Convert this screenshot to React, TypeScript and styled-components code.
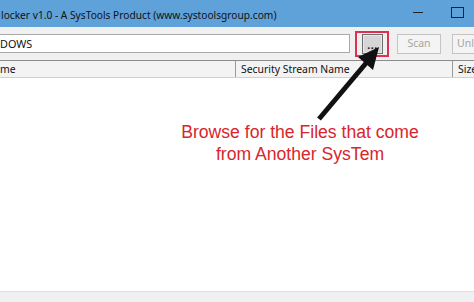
import React from 'react'
import styled, { createGlobalStyle } from 'styled-components'

const GlobalStyle = createGlobalStyle`
    html, body {
        margin: 0;
        padding: 0;
        background: #ffffff;
        overflow: hidden;
    }
    #root {
        width: 474px;
        height: 302px;
    }
`

const Window = styled.div`
    position: relative;
    width: 474px;
    height: 302px;
    display: flex;
    flex-direction: column;
    overflow: hidden;
    font-family: "Noto Sans", "Open Sans", sans-serif;
    background: #ffffff;
`

const TitleBar = styled.div`
    height: 27px;
    flex: none;
    display: flex;
    align-items: center;
    background: #5fa2da;
    color: #111;
    font-size: 10.2px;
    .title-bar {
        &__text {
            padding-left: 1px;
            margin-top: 2px;
            white-space: nowrap;
        }
        &__controls {
            margin-left: auto;
            display: flex;
            align-items: center;
            gap: 28px;
            padding-right: 10px;
            margin-top: -3px;
        }
    }
`

const MinIcon = styled.span`
    width: 10px;
    height: 1px;
    background: #222;
`

const MaxIcon = styled.span`
    width: 11px;
    height: 9px;
    border: 1px solid #222;
`

const Toolbar = styled.div`
    height: 33px;
    flex: none;
    display: flex;
    align-items: center;
    background: #f0f0f0;
    box-sizing: border-box;
    & > * {
        flex: none;
    }
`

const PathBox = styled.div`
    width: 352px;
    height: 19px;
    margin-left: -2px;
    box-sizing: border-box;
    border: 1px solid #a9a9a9;
    background: #fff;
    display: flex;
    align-items: center;
    padding-left: 1px;
    font-size: 10.8px;
    color: #111;
    margin-top: -1px;
`

const BrowseWrap = styled.div`
    position: relative;
    margin-left: 12px;
    &::after {
        content: '';
        position: absolute;
        left: -7px;
        right: -6px;
        top: -3px;
        bottom: -3px;
        border: 2px solid #dd3053;
        pointer-events: none;
    }
`

const Button = styled.button<{ $disabled?: boolean; $width: number }>`
    box-sizing: border-box;
    width: ${({ $width }) => $width}px;
    height: 20px;
    padding: 0;
    margin: 0;
    font-family: "Noto Sans", "Open Sans", sans-serif;
    font-size: 10.5px;
    line-height: 1;
    display: flex;
    align-items: center;
    justify-content: center;
    white-space: nowrap;
    overflow: hidden;
    color: ${({ $disabled }) => ($disabled ? '#a4a4a4' : '#111')};
    background: ${({ $disabled }) => ($disabled ? '#f4f4f4' : '#d6d6d6')};
    border: 1px solid ${({ $disabled }) => ($disabled ? '#c4c4c4' : '#6e6e6e')};
    box-shadow: ${({ $disabled }) => ($disabled ? 'none' : 'inset 0 0 0 1px #e8e8e8')};
`

const Dots = styled.span`
    margin-top: 4px;
    font-weight: 700;
    letter-spacing: 0.5px;
`

const ButtonSlot = styled.div<{ $gap: number }>`
    margin-left: ${({ $gap }) => $gap}px;
`

const HeaderRow = styled.div`
    height: 18px;
    flex: none;
    display: flex;
    box-sizing: border-box;
    border-top: 1px solid #8c8c8c;
    border-bottom: 1px solid #d0d0d0;
    background: #f3f3f3;
    font-size: 10.4px;
    color: #111;
`

const HeaderCell = styled.div<{ $width?: number }>`
    ${({ $width }) => ($width ? `width: ${$width}px; flex: none;` : 'flex: 1;')}
    box-sizing: border-box;
    display: flex;
    align-items: center;
    padding-left: 5px;
    border-right: 1px solid #9a9a9a;
    white-space: nowrap;
    overflow: hidden;
    &:first-child {
        padding-left: 0;
    }
    &:last-child {
        border-right: none;
    }
`

const ListBody = styled.div`
    flex: 1;
    background: #ffffff;
`

const StatusBar = styled.div`
    height: 10px;
    flex: none;
    border-top: 1px solid #e2dfe2;
    background: #f0eff2;
`

const Callout = styled.div`
    position: absolute;
    left: 130px;
    width: 340px;
    top: 121px;
    text-align: center;
    color: #d9252b;
    font-family: "Liberation Sans", Arial, sans-serif;
    font-size: 17.6px;
    line-height: 22px;
`

const ArrowSvg = styled.svg`
    position: absolute;
    left: 0;
    top: 0;
    pointer-events: none;
`

const App = () => {
    return (
        <>
            <GlobalStyle />
            <Window>
                <TitleBar>
                    <span className="title-bar__text">locker v1.0 - A SysTools Product (www.systoolsgroup.com)</span>
                    <div className="title-bar__controls">
                        <MinIcon />
                        <MaxIcon />
                    </div>
                </TitleBar>
                <Toolbar>
                    <PathBox>DOWS</PathBox>
                    <BrowseWrap>
                        <Button $width={21}>
                            <Dots>...</Dots>
                        </Button>
                    </BrowseWrap>
                    <ButtonSlot $gap={14}>
                        <Button $width={44} $disabled>Scan</Button>
                    </ButtonSlot>
                    <ButtonSlot $gap={11}>
                        <Button $width={44} $disabled>Unlock</Button>
                    </ButtonSlot>
                </Toolbar>
                <HeaderRow>
                    <HeaderCell $width={236}>me</HeaderCell>
                    <HeaderCell $width={217}>Security Stream Name</HeaderCell>
                    <HeaderCell>Size</HeaderCell>
                </HeaderRow>
                <ListBody />
                <StatusBar />
                <ArrowSvg width="474" height="302" viewBox="0 0 474 302">
                    <line x1="319" y1="119" x2="367" y2="62" stroke="#111" strokeWidth="5" />
                    <polygon points="379,47 373,70 358,57" fill="#111" />
                </ArrowSvg>
                <Callout>
                    Browse for the Files that come
                    <br />
                    from Another SysTem
                </Callout>
            </Window>
        </>
    )
}

export default App
